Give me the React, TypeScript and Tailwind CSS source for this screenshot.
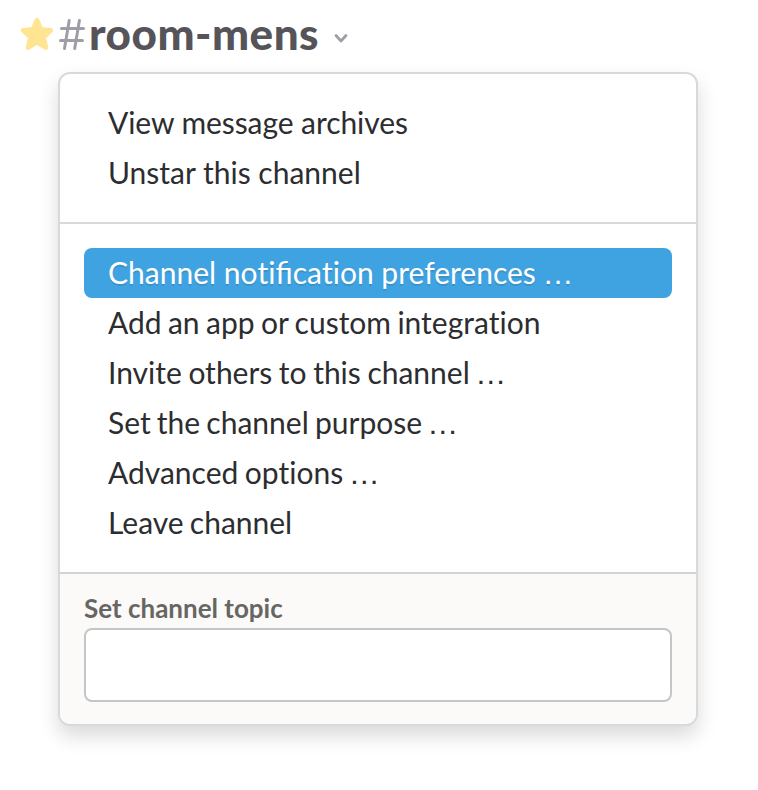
import { Fragment } from "react";

type Entry = { label: string; track: string };

const top: Entry[] = [
  { label: "View message archives", track: "tracking-[-0.08px]" },
  { label: "Unstar this channel", track: "tracking-normal" },
];
const items: Entry[] = [
  { label: "Channel notification preferences …", track: "tracking-normal" },
  { label: "Add an app or custom integration", track: "[word-spacing:-1.3px]" },
  { label: "Invite others to this channel …", track: "[word-spacing:-1.1px]" },
  { label: "Set the channel purpose …", track: "[word-spacing:-1.5px]" },
  { label: "Advanced options …", track: "[word-spacing:-1.2px]" },
  { label: "Leave channel", track: "[word-spacing:-1.5px]" },
];

// Keeps "ti" as two separate letters and gives the ellipsis its wide spacing.
function Label({ text }: { text: string }) {
  return (
    <>
      {text.split(/(ti|…)/).map((part, i) => {
        if (part === "ti") return <span key={i} className="[font-variant-ligatures:none]">ti</span>;
        if (part === "…") return <span key={i} className="-ml-px font-['Liberation_Sans',sans-serif] text-[31px] leading-none">…</span>;
        return <Fragment key={i}>{part}</Fragment>;
      })}
    </>
  );
}

function Item({ label, track, active = false }: Entry & { active?: boolean }) {
  return (
    <li
      className={`h-[50px] whitespace-nowrap px-6 leading-[48px] ${track} ${
        active ? "rounded-[8px] bg-[#3fa2e1] text-white [text-shadow:0_2px_0_rgba(0,0,0,0.1)]" : ""
      }`}
    >
      <Label text={label} />
    </li>
  );
}

export default function App() {
  return (
    <div className="h-[790px] w-[758px] overflow-hidden bg-white font-['Lato',sans-serif] text-[#2c2d30]">
      <header className="flex h-[72px] items-start pl-5">
        <svg className="mt-[17px] h-[34px] w-[34px]" viewBox="0 0 34 34">
          <path d="M17 3.200L20.800 12.300L30.800 13.300L23.500 20.200L25.800 30.500L17 25.300L8.200 30.500L10.500 20.200L3.200 13.300L13.200 12.300z" fill="#ffe492" stroke="#ffe492" strokeWidth="4.800" strokeLinejoin="round" />
        </svg>
        <svg className="ml-1 mt-[18px] h-[34px] w-[28px]" viewBox="0 0 28 34">
          <path d="M11.200 2.500L6.500 30.500M21.400 2.500L16.700 30.500M3.500 10.500h22M2.500 22.500h22" fill="none" stroke="#9e9ea6" strokeWidth="3" strokeLinecap="round" />
        </svg>
        <h1 className="ml-[3px] mt-[6px] text-[44px] leading-[54px] font-black tracking-[0.5px] text-[#555459]">room-mens</h1>
        <svg className="ml-[14px] mt-[32px] h-3 w-[16px]" viewBox="0 0 16 12">
          <path d="M3 3.500l5 5.500 5-5.500" fill="none" stroke="#9e9ea6" strokeWidth="2.800" strokeLinecap="round" strokeLinejoin="round" />
        </svg>
      </header>
      <div className="ml-[58px] h-[654px] w-[640px] rounded-[12px] border-2 border-[#d9d9d9] bg-white shadow-[0_10px_20px_rgba(0,0,0,0.15)]">
        <ul className="h-[150px] border-b-2 border-[#d9d9d9] px-6 pt-6 text-[30px]">
          {top.map((t) => <Item key={t.label} {...t} />)}
        </ul>
        <ul className="h-[350px] border-b-2 border-[#d3d3d3] px-6 pt-6 text-[30px]">
          {items.map((t, i) => <Item key={t.label} {...t} active={i === 0} />)}
        </ul>
        <div className="h-[150px] rounded-b-[10px] bg-[#fbfaf8] px-6 pt-[16px]">
          <label htmlFor="topic" className="block h-[38px] text-[26px] leading-[37px] font-bold text-[#666663]">Set channel topic</label>
          <input id="topic" className="block h-[74px] w-full rounded-[8px] border-2 border-[#c5c5c5] bg-white px-4 text-[30px] outline-none" />
        </div>
      </div>
    </div>
  );
}
